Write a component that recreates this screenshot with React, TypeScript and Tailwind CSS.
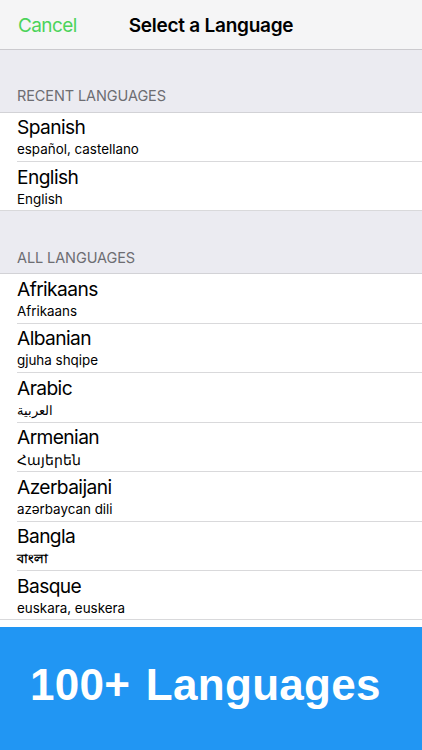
interface Language {
  name: string;
  nativeName: string;
  nativeClass?: string;
}

const recentLanguages: Language[] = [
  { name: "Spanish", nativeName: "español, castellano" },
  { name: "English", nativeName: "English" },
];

const allLanguages: Language[] = [
  { name: "Afrikaans", nativeName: "Afrikaans" },
  { name: "Albanian", nativeName: "gjuha shqipe" },
  { name: "Arabic", nativeName: "العربية", nativeClass: "text-[13px]" },
  { name: "Armenian", nativeName: "Հայերեն", nativeClass: "text-[14px]" },
  { name: "Azerbaijani", nativeName: "azərbaycan dili" },
  {
    name: "Bangla",
    nativeName: "বাংলা",
    nativeClass: "text-[13.4px] font-semibold",
  },
  { name: "Basque", nativeName: "euskara, euskera" },
];

interface SectionProps {
  title: string;
  languages: Language[];
  headerClass: string;
}

function Section({ title, languages, headerClass }: SectionProps) {
  return (
    <section>
      <h2
        className={`flex items-end border-b border-[#d2d2d6] bg-[#ebebf1] pl-[17px] text-[14.5px] leading-[18px] tracking-[-0.1px] text-[#6d6d72] ${headerClass}`}
      >
        {title}
      </h2>
      <ul>
        {languages.map((language) => (
          <li
            key={language.name}
            className="group h-[49.5px] bg-white pl-[17px] last:h-[49px]"
          >
            <div className="flex h-full flex-col border-b border-[#d9d9db] pt-[2.5px] group-last:-ml-[17px] group-last:pl-[17px]">
              <span className="text-[19.2px] leading-[24px] tracking-[-0.6px]">
                {language.name}
              </span>
              <span
                className={`leading-[21px] ${language.nativeClass ?? "text-[13.4px]"}`}
              >
                {language.nativeName}
              </span>
            </div>
          </li>
        ))}
      </ul>
    </section>
  );
}

function App() {
  return (
    <div className="flex h-[750px] w-full flex-col overflow-hidden bg-white font-[Inter,'Noto_Sans',sans-serif] text-black">
      <header className="grid h-[50px] shrink-0 grid-cols-[1fr_auto_1fr] items-center border-b border-[#cbcace] bg-[#f5f5f6] px-[18px] pt-[3px]">
        <button className="justify-self-start text-[19px] tracking-[-0.6px] text-[#4cd35b]">
          Cancel
        </button>
        <h1 className="text-[19px] font-semibold tracking-[-0.25px]">
          Select a Language
        </h1>
      </header>
      <main className="h-[577px] shrink-0 overflow-hidden">
        <Section
          title="RECENT LANGUAGES"
          languages={recentLanguages}
          headerClass="h-[62.5px] pb-[7px]"
        />
        <Section
          title="ALL LANGUAGES"
          languages={allLanguages}
          headerClass="h-[63px] pb-[6px]"
        />
      </main>
      <footer className="flex h-[123px] shrink-0 items-center bg-[#2196f3] pl-[30px] pb-[8px] font-['Liberation_Sans',sans-serif] text-[44px] font-bold tracking-[0.3px] text-white [word-spacing:3px]">
        100+ Languages
      </footer>
    </div>
  );
}

export default App;
